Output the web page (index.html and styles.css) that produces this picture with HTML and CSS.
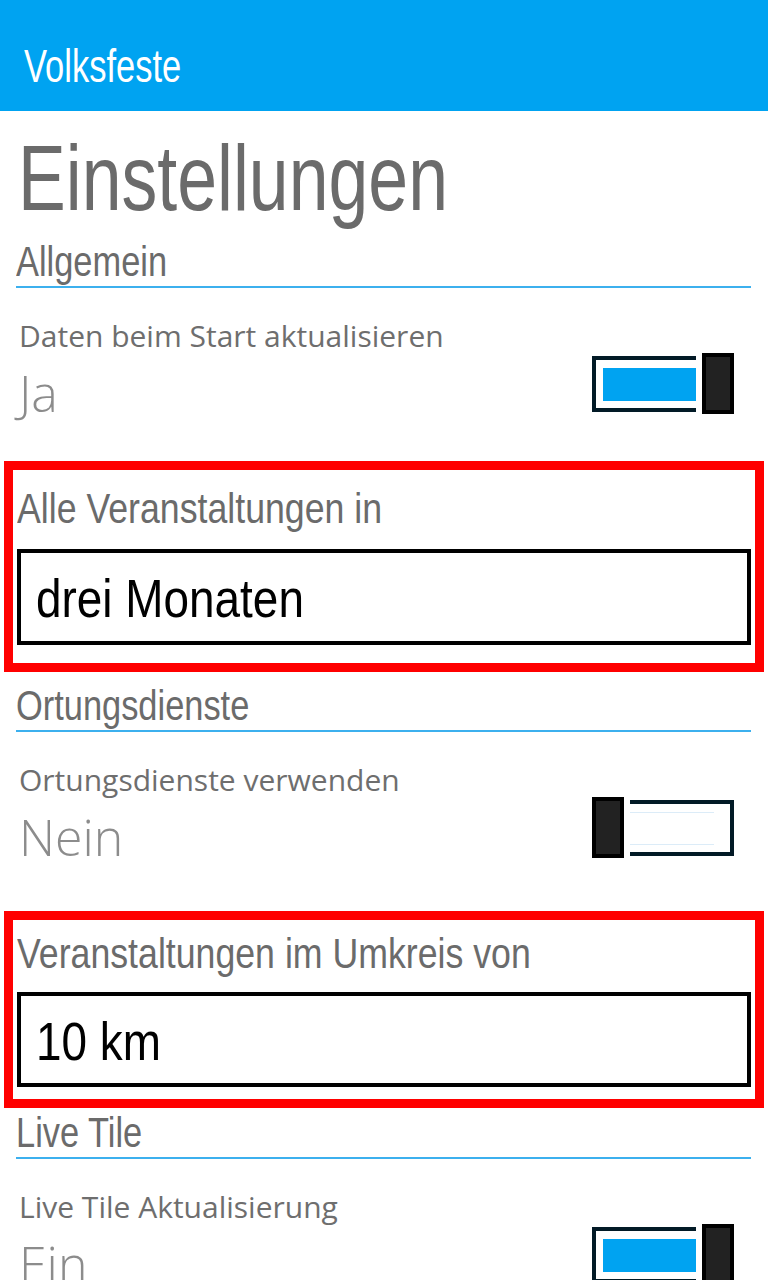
FILE: index.html
```html
<!DOCTYPE html>
<html lang="de">
<head>
    <meta charset="UTF-8">
    <title>Volksfeste - Einstellungen</title>
    <link rel="stylesheet" href="styles.css">
</head>
<body>
    <header class="appbar">
        <span class="app-title narrow">Volksfeste</span>
    </header>

    <main class="content">
        <h1 class="page-title"><span class="narrow">Einstellungen</span></h1>

        <h2 class="group-title"><span class="narrow">Allgemein</span></h2>
        <div class="setting-row">
            <div class="setting-text">
                <div class="setting-label">Daten beim Start aktualisieren</div>
                <div class="setting-value">Ja</div>
            </div>
            <div class="toggle on">
                <div class="track"><div class="fill"></div></div>
                <div class="knob"></div>
            </div>
        </div>

        <div class="picker picker-first">
            <div class="picker-label"><span class="narrow">Alle Veranstaltungen in</span></div>
            <div class="picker-box"><span class="narrow">drei Monaten</span></div>
        </div>

        <h2 class="group-title after-first"><span class="narrow">Ortungsdienste</span></h2>
        <div class="setting-row">
            <div class="setting-text">
                <div class="setting-label">Ortungsdienste verwenden</div>
                <div class="setting-value">Nein</div>
            </div>
            <div class="toggle off">
                <div class="knob"></div>
                <div class="track"><div class="fill"></div></div>
            </div>
        </div>

        <div class="picker picker-second">
            <div class="picker-label"><span class="narrow">Veranstaltungen im Umkreis von</span></div>
            <div class="picker-box"><span class="narrow">10 km</span></div>
        </div>

        <h2 class="group-title after-second"><span class="narrow">Live Tile</span></h2>
        <div class="setting-row">
            <div class="setting-text">
                <div class="setting-label">Live Tile Aktualisierung</div>
                <div class="setting-value">Ein</div>
            </div>
            <div class="toggle on">
                <div class="track"><div class="fill"></div></div>
                <div class="knob"></div>
            </div>
        </div>
    </main>
</body>
</html>
```

FILE: styles.css
```css
:root {
    --accent: #00a3f1;
    --title-gray: #6b6b6b;
    --value-gray: #8c8c8c;
    --din: "Liberation Sans", Arial, sans-serif;
    --segoe: "Open Sans", "Noto Sans", sans-serif;
}

html, body {
    margin: 0;
    padding: 0;
    background: #fff;
    overflow: hidden;
}

body {
    width: 768px;
    height: 1280px;
    font-family: var(--segoe);
}

/* the app font is a narrow DIN face, squeeze the sans to get there */
.narrow {
    display: inline-block;
    white-space: nowrap;
    transform-origin: left center;
    transform: scaleX(0.8);
}

.appbar {
    height: 111px;
    box-sizing: border-box;
    padding: 40px 0 0 24px;
    background: var(--accent);
}

.app-title {
    font-family: var(--din);
    font-size: 46px;
    line-height: 52px;
    color: #fff;
    transform: scaleX(0.75);
}

.content {
    padding: 0 17px 0 16px;
}

.page-title {
    margin: 22px 0 0 2px;
    font-family: var(--din);
    font-weight: normal;
    font-size: 93px;
    line-height: 90px;
    color: var(--title-gray);
}

.page-title .narrow {
    transform: scaleX(0.77);
}

.group-title {
    margin: 14px 0 0;
    padding-bottom: 1px;
    border-bottom: 2px solid #3cb0ee;
    font-family: var(--din);
    font-weight: normal;
    font-size: 43px;
    line-height: 48px;
    color: var(--title-gray);
}

.group-title.after-first {
    margin-top: 9px;
}

.group-title.after-second {
    margin-top: 0;
}

.setting-row {
    display: flex;
    justify-content: space-between;
    align-items: flex-start;
    margin-top: 32px;
    padding: 0 17px 0 3px;
}

.setting-label {
    font-size: 30px;
    line-height: 32px;
    color: #6e6e6e;
}

.setting-value {
    margin-top: 13px;
    font-size: 50px;
    font-weight: 300;
    line-height: 56px;
    color: var(--value-gray);
}

/* toggle switch */
.toggle {
    display: flex;
    align-items: center;
    width: 142px;
    height: 61px;
    margin-top: 33px;
}

.track {
    flex: 1;
    height: 56px;
    box-sizing: border-box;
    border: 4px solid #021a26;
    padding: 8px 0 7px 7px;
}

.toggle.on .track {
    border-right: none;
}

.toggle.on .fill {
    height: 100%;
    background: var(--accent);
}

.toggle.off .track {
    border-left: none;
    padding: 8px 8px 7px 0;
}

.toggle.off .fill {
    height: 100%;
    box-sizing: border-box;
    margin-right: 8px;
    border-top: 1px solid #dcecf8;
    border-bottom: 1px solid #dcecf8;
}

.knob {
    width: 32px;
    height: 61px;
    box-sizing: border-box;
    border: 4px solid #000;
    background: #222;
}

.toggle.on .knob {
    margin-left: 6px;
}

.toggle.off .knob {
    margin-right: 6px;
}

/* highlighted list pickers */
.picker {
    margin: 40px -13px 0 -12px;
    border: 9px solid #ff0000;
    padding: 14px 4px 18px 4px;
}

.picker-second {
    margin-top: 46px;
    padding: 9px 4px 12px 4px;
}

.picker-label {
    font-family: var(--din);
    font-size: 43px;
    line-height: 48px;
    color: var(--title-gray);
}

.picker-label .narrow {
    transform: scaleX(0.83);
}

.picker-box {
    margin-top: 17px;
    height: 96px;
    box-sizing: border-box;
    border: 4px solid #000;
    padding-left: 15px;
    overflow: hidden;
    font-family: var(--din);
    font-size: 54px;
    line-height: 90px;
    color: #000;
}

.picker-box .narrow {
    transform: scaleX(0.85);
}

.picker-second .picker-box {
    margin-top: 15px;
    height: 95px;
}
```
